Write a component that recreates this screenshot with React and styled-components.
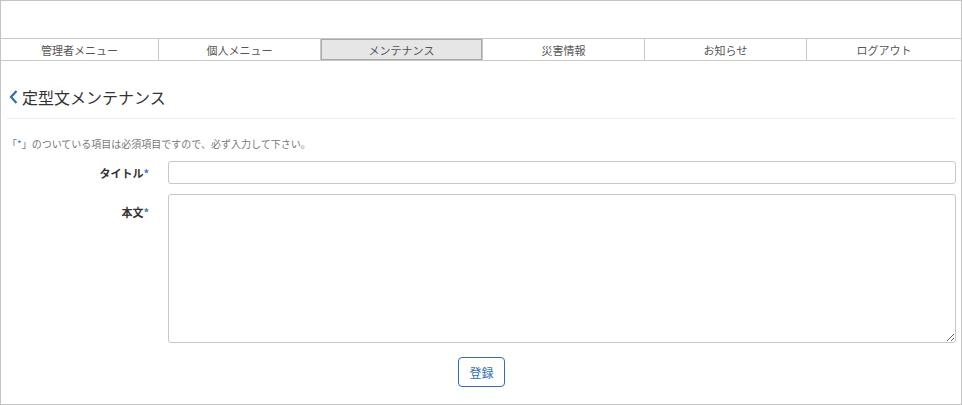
import React from 'react';
import styled, { createGlobalStyle } from 'styled-components';

const GlobalStyle = createGlobalStyle`
  html, body {
    margin: 0;
    padding: 0;
    background: #fff;
  }
  body {
    font-family: "Noto Sans CJK JP", "Noto Sans", sans-serif;
    color: #333;
  }
  * { box-sizing: border-box; }
`;

const menus = ['管理者メニュー', '個人メニュー', 'メンテナンス', '災害情報', 'お知らせ', 'ログアウト'];

const App = () => {
  return (
    <>
      <GlobalStyle />
      <Frame>
        <TopSpace />
        <Nav>
          {menus.map((m) => (
            <NavItem key={m} $active={m === 'メンテナンス'}>{m}</NavItem>
          ))}
        </Nav>
        <Content>
          <Heading>
            <svg width="9" height="14" viewBox="0 0 9 14">
              <polyline points="7.5,1 2,7 7.5,13" fill="none" stroke="#2d6db3" strokeWidth="2.2" />
            </svg>
            <span>定型文メンテナンス</span>
          </Heading>
          <Notice>「<Req>*</Req>」のついている項目は必須項目ですので、必ず入力して下さい。</Notice>
          <Form>
            <Label>タイトル<Req>*</Req></Label>
            <Input type="text" />
            <Label $top>本文<Req>*</Req></Label>
            <TextArea />
          </Form>
          <Actions>
            <Button>登録</Button>
          </Actions>
        </Content>
      </Frame>
    </>
  );
};

export default App;

const Frame = styled.div`
  width: 962px;
  height: 405px;
  border: 1px solid #c3c3c3;
  display: flex;
  flex-direction: column;
`;

const TopSpace = styled.div`
  height: 37px;
`;

const Nav = styled.div`
  display: flex;
  border-top: 1px solid #c8c8c8;
  border-bottom: 1px solid #c8c8c8;
  height: 23px;
`;

const NavItem = styled.div`
  width: 162px;
  flex: none;
  display: flex;
  align-items: center;
  justify-content: center;
  font-size: 11px;
  color: #555;
  border-right: 1px solid #c8c8c8;
  background: ${(p) => (p.$active ? '#e6e6e6' : '#fff')};
  box-shadow: ${(p) => (p.$active ? 'inset 0 0 0 1px #a9a9a9' : 'none')};
  &:first-child {
    width: 158px;
  }
  &:last-child {
    flex: 1;
    border-right: none;
  }
`;

const Content = styled.div`
  padding: 0 5px 0 6px;
`;

const Heading = styled.h1`
  margin: 24px 0 0;
  padding: 0 0 9px 2px;
  border-bottom: 1px solid #ececec;
  display: flex;
  align-items: center;
  gap: 4px;
  font-size: 16px;
  font-weight: 400;
  line-height: 24px;
  color: #333;
`;

const Notice = styled.p`
  margin: 18px 0 10px;
  font-size: 10px;
  line-height: 14px;
  color: #777;
`;

const Req = styled.span`
  color: #3a7cc4;
`;

const Form = styled.div`
  display: grid;
  grid-template-columns: 150px 1fr;
  column-gap: 11px;
  row-gap: 10px;
`;

const Label = styled.label`
  font-size: 11px;
  font-weight: 700;
  color: #333;
  text-align: right;
  padding-right: 8px;
  align-self: ${(p) => (p.$top ? 'start' : 'center')};
  padding-top: ${(p) => (p.$top ? '10px' : '0')};
`;

const Input = styled.input`
  height: 23px;
  border: 1px solid #c8c8c8;
  border-radius: 3px;
  padding: 2px 6px;
  font-size: 12px;
  outline: none;
`;

const TextArea = styled.textarea`
  height: 149px;
  border: 1px solid #c8c8c8;
  border-radius: 3px;
  padding: 4px 6px;
  font-size: 12px;
  font-family: inherit;
  outline: none;
  resize: both;
`;

const Actions = styled.div`
  display: flex;
  justify-content: center;
  margin-top: 14px;
`;

const Button = styled.button`
  width: 47px;
  height: 30px;
  border: 1.5px solid #2f6fae;
  border-radius: 4px;
  background: #fff;
  color: #2f6fae;
  font-size: 12px;
  font-family: "Noto Sans CJK JP", sans-serif;
  padding: 0;
  cursor: pointer;
`;
